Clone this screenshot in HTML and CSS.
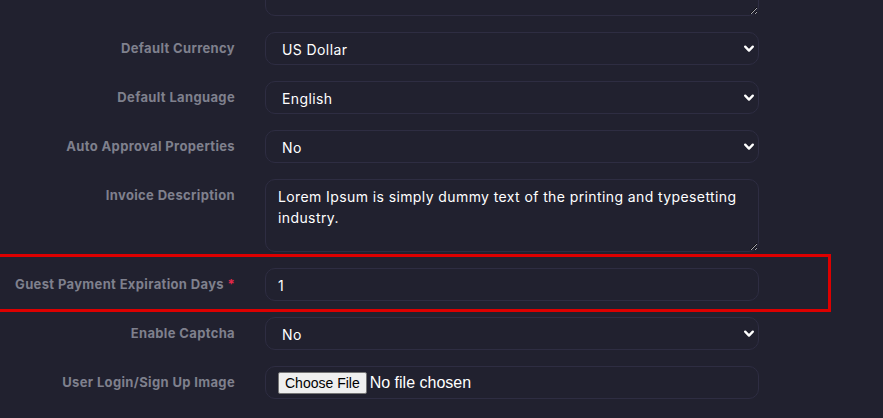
FILE: index.html
```html
<!DOCTYPE html>
<html lang="en">
<head>
<meta charset="utf-8">
<title>Settings</title>
<link rel="stylesheet" href="styles.css">
</head>
<body>
<div class="form">
  <div class="row">
    <label class="label"></label>
    <div class="field"><textarea class="control area"></textarea></div>
  </div>
  <div class="row">
    <label class="label">Default Currency</label>
    <div class="field">
      <select class="control select"><option>US Dollar</option></select>
    </div>
  </div>
  <div class="row">
    <label class="label">Default Language</label>
    <div class="field">
      <select class="control select"><option>English</option></select>
    </div>
  </div>
  <div class="row">
    <label class="label">Auto Approval Properties</label>
    <div class="field">
      <select class="control select"><option>No</option></select>
    </div>
  </div>
  <div class="row">
    <label class="label">Invoice Description</label>
    <div class="field"><textarea class="control area">Lorem Ipsum is simply dummy text of the printing and typesetting industry.</textarea></div>
  </div>
  <div class="row highlight">
    <label class="label">Guest Payment Expiration Days <span class="req">*</span></label>
    <div class="field"><input class="control input" type="text" value="1"></div>
  </div>
  <div class="row">
    <label class="label">Enable Captcha</label>
    <div class="field">
      <select class="control select"><option>No</option></select>
    </div>
  </div>
  <div class="row">
    <label class="label">User Login/Sign Up Image</label>
    <div class="field"><input class="control file" type="file"></div>
  </div>
</div>
</body>
</html>
```

FILE: styles.css
```css
html, body {
  margin: 0;
  padding: 0;
  background: #21212f;
  height: 100%;
  overflow: hidden;
}

body {
  font-family: "Inter", "Noto Sans", sans-serif;
}

.form {
  width: 759px;
  margin-top: -57px;
  display: flex;
  flex-direction: column;
  gap: 16px;
}

.row {
  display: grid;
  grid-template-columns: 235px 494px;
  column-gap: 30px;
  align-items: start;
}

.label {
  text-align: right;
  font-size: 13px;
  font-weight: 700;
  letter-spacing: 0.35px;
  color: #7f808d;
  line-height: 20px;
  padding-top: 6px;
  white-space: nowrap;
}

.req {
  color: #e3284a;
}

.control {
  box-sizing: border-box;
  width: 100%;
  margin: 0;
  display: block;
  background-color: #21212f;
  border: 1px solid #2e2d42;
  border-radius: 10px;
  color: #ffffff;
  font-family: "Inter", "Noto Sans", sans-serif;
  font-size: 14px;
  letter-spacing: 0.4px;
  outline: none;
}

.input,
.select {
  height: 33px;
  padding: 1px 12px 0;
}

.select {
  appearance: none;
  -webkit-appearance: none;
  padding-left: 16px;
  background-image: url("data:image/svg+xml,%3Csvg xmlns='http://www.w3.org/2000/svg' viewBox='0 0 10 8'%3E%3Cpath d='M1.2 1.6 5 5.6 8.8 1.6' fill='none' stroke='%23ffffff' stroke-width='2.3' stroke-linecap='round' stroke-linejoin='round'/%3E%3C/svg%3E");
  background-repeat: no-repeat;
  background-position: right 4px center;
  background-size: 10px 8px;
}

.area {
  height: 73px;
  padding: 6px 12px;
  line-height: 21px;
  resize: vertical;
  color-scheme: dark;
}

.file {
  height: 33px;
  padding: 5px 12px;
  font-family: "Liberation Sans", Arial, sans-serif;
  font-size: 16px;
  letter-spacing: 0;
  color: #ffffff;
}

.file::file-selector-button {
  font-family: "Liberation Sans", Arial, sans-serif;
  font-size: 14px;
  height: 22px;
  padding: 0 6px;
  margin-right: 3px;
  background: #efefef;
  color: #000000;
  border: 1px solid #767676;
  border-radius: 2px;
}

.highlight {
  position: relative;
}

.highlight::after {
  content: "";
  position: absolute;
  top: -14px;
  bottom: -11px;
  left: -10px;
  right: -72px;
  border: 3px solid #dd0000;
  pointer-events: none;
}
```
